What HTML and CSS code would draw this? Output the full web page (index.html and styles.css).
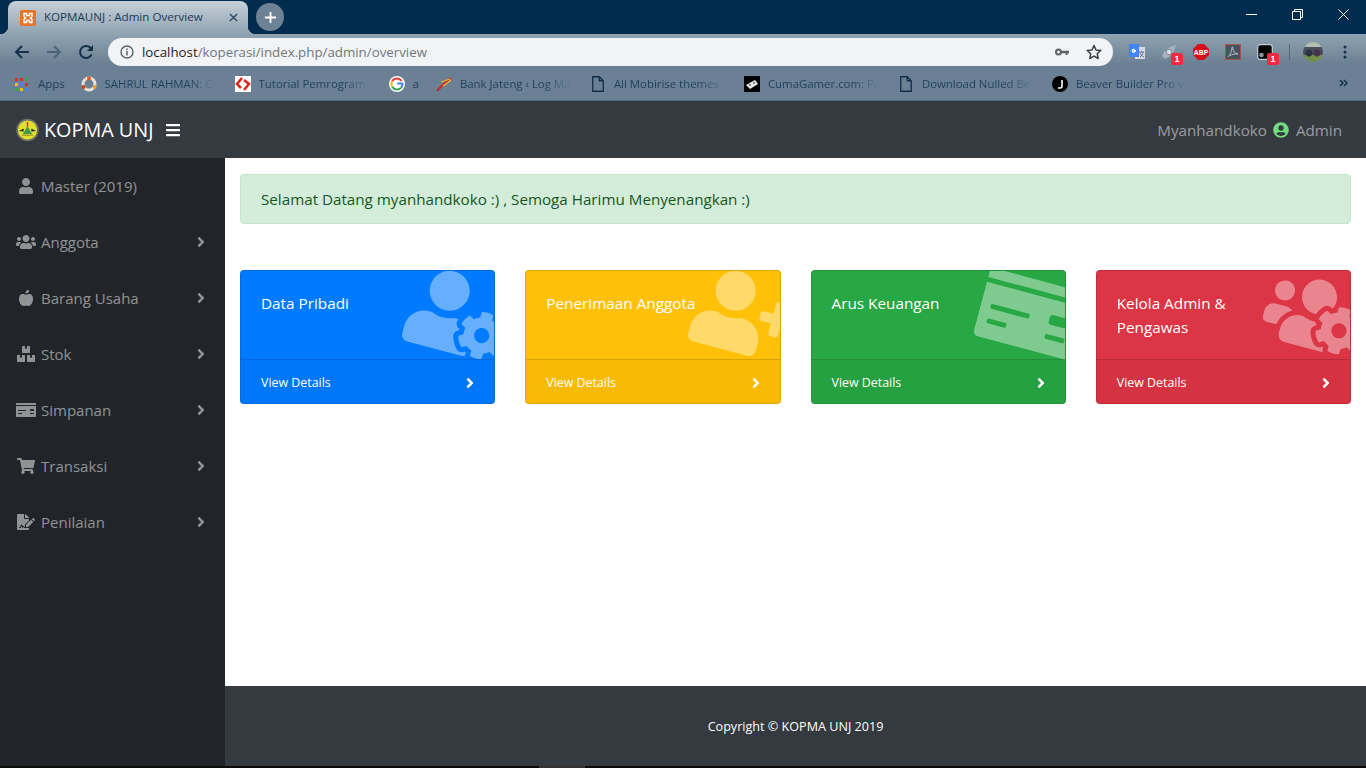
FILE: index.html
```html
<!DOCTYPE html>
<html lang="id">
<head>
<meta charset="utf-8">
<title>KOPMAUNJ : Admin Overview</title>
<link rel="stylesheet" href="styles.css">
</head>
<body>
<svg class="defs" width="0" height="0" aria-hidden="true">
  <symbol id="i-chevron" viewBox="0 0 256 512"><path d="M224.300 273l-136 136c-9.400 9.400-24.600 9.400-33.900 0l-22.600-22.600c-9.400-9.400-9.400-24.600 0-33.900l96.400-96.400-96.400-96.400c-9.400-9.400-9.400-24.600 0-33.900L54.300 103c9.400-9.400 24.600-9.400 33.900 0l136 136c9.500 9.400 9.500 24.600.1 34z"/></symbol>
  <symbol id="i-file" viewBox="0 0 12 16"><path d="M.75.75h6.500l4 4v10.500h-10.500z M7.250.75v4h4" fill="none" stroke="currentColor" stroke-width="1.300"/></symbol>
</svg>

<header class="browser">
  <div class="tabstrip">
    <div class="tab">
      <svg class="tab-fav" viewBox="0 0 16 16"><rect width="16" height="16" rx="1.500" fill="#e8742a"/><path d="M4 3.500h2.500v2h3v-2H12v3l-1.500 1.500L12 9.500v3H9.500v-2h-3v2H4v-3L5.500 8 4 6.500z" fill="none" stroke="#fff" stroke-width="1.400"/></svg>
      <span class="tab-title">KOPMAUNJ : Admin Overview</span>
      <svg class="tab-close" viewBox="0 0 10 10"><path d="M1 1l8 8M9 1l-8 8" stroke="#2e4a62" stroke-width="1.600"/></svg>
    </div>
    <div class="newtab"><svg viewBox="0 0 14 14"><path d="M7 1v12M1 7h12" stroke="#fff" stroke-width="2"/></svg></div>
    <div class="winctl">
      <svg viewBox="0 0 11 11"><path d="M0 5.500h11" stroke="#fff"/></svg>
      <svg viewBox="0 0 11 11"><path d="M.5 2.500h8v8h-8zM2.500 2.500v-2h8v8h-2" fill="none" stroke="#fff"/></svg>
      <svg viewBox="0 0 11 11"><path d="M.5.500l10 10M10.500.500l-10 10" stroke="#fff"/></svg>
    </div>
  </div>
  <div class="toolbars">
    <div class="toolbar">
      <div class="navbtns">
        <svg viewBox="0 0 16 16"><path d="M15 8H2M8 2L2 8l6 6" fill="none" stroke="#14304a" stroke-width="2"/></svg>
        <svg viewBox="0 0 16 16"><path d="M1 8h13M8 2l6 6-6 6" fill="none" stroke="#4c6479" stroke-width="2"/></svg>
        <svg viewBox="0 0 16 16"><path d="M13.500 10.500A6 6 0 1 1 12.300 3.800L14 5.500" fill="none" stroke="#14304a" stroke-width="2"/><path d="M15 1v6H9z" fill="#14304a"/></svg>
      </div>
      <div class="omnibox">
        <svg class="omni-info" viewBox="0 0 14 14"><circle cx="7" cy="7" r="6" fill="none" stroke="#5f6368" stroke-width="1.400"/><path d="M7 6v4.500M7 3.500v1.400" stroke="#5f6368" stroke-width="1.500"/></svg>
        <span class="url"><span class="url-host">localhost</span>/koperasi/index.php/admin/overview</span>
        <svg class="omni-key" viewBox="0 0 14 8"><circle cx="3.500" cy="4" r="2.500" fill="none" stroke="#5f6368" stroke-width="2"/><path d="M6 2.800h8v2.400h-1.400v1.800h-2V5.200H6z" fill="#5f6368"/></svg>
        <svg class="omni-star" viewBox="0 0 16 16"><path d="M8 1.500l2 4.500 4.800.5-3.600 3.200 1 4.800L8 12.100l-4.200 2.400 1-4.800L1.200 6.500 6 6z" fill="none" stroke="#3c4043" stroke-width="1.500" stroke-linejoin="round"/></svg>
      </div>
      <div class="exts">
        <div class="ext"><svg viewBox="0 0 16 16"><rect x="6" y="3" width="10" height="12" fill="#d5dade"/><path d="M10 8h5M12.500 7v1M11 13c2-1 2.500-3 3-5M11 9c1 2 2 3 4 4" fill="none" stroke="#667" stroke-width=".9"/><path d="M0 0h10v13H0z" fill="#4285f4"/><path d="M7 6.500H5v1h1a1.500 1.500 0 1 1-.4-2" fill="none" stroke="#fff" stroke-width="1.100"/></svg></div>
        <div class="ext"><svg viewBox="0 0 16 16"><path d="M15 1L9 3 3 8l-2 4 3 3 4-2 5-6z" fill="#a6b2bd"/><circle cx="8" cy="8" r="2.600" fill="#dfe4e8" stroke="#7d8c99"/></svg><span class="badge">1</span></div>
        <div class="ext"><svg viewBox="0 0 16 16"><path d="M5 0h6l5 5v6l-5 5H5l-5-5V5z" fill="#d5101d"/><text class="abp" x="8" y="10.700" text-anchor="middle">ABP</text></svg></div>
        <div class="ext"><svg viewBox="0 0 16 16"><rect x=".5" y=".5" width="15" height="15" fill="#45535f" stroke="#a4524c"/><path d="M3 13c2-2 3.500-5 4-9 .2-2 1.300-1 1 1-.3 2 1.500 4 5 5-3-.3-6 .3-8 1.500" fill="none" stroke="#b9c0c6"/></svg></div>
        <div class="ext"><svg viewBox="0 0 16 16"><rect x=".7" y=".7" width="14.600" height="14.600" rx="2.500" fill="#000" stroke="#c6ccd1" stroke-width="1.200"/><circle cx="4.500" cy="11" r="2.300" fill="#8a949c"/></svg><span class="badge">1</span></div>
        <div class="ext-sep"></div>
        <div class="avatar"></div>
        <svg class="kebab" viewBox="0 0 4 14"><circle cx="2" cy="2" r="1.500"/><circle cx="2" cy="7" r="1.500"/><circle cx="2" cy="12" r="1.500"/></svg>
      </div>
    </div>
    <div class="bookmarks">
      <div class="bm bm-apps"><svg class="bm-ico-sm" viewBox="0 0 13 13"><path d="M0 0h3v3H0z" fill="#d93025"/><path d="M5 0h3v3H5z" fill="#d93025"/><path d="M10 0h3v3h-3z" fill="#34a853"/><path d="M0 5h3v3H0z" fill="#fbbc04"/><path d="M5 5h3v3H5z" fill="#4285f4"/><path d="M10 5h3v3h-3z" fill="#d93025"/><path d="M0 10h3v3H0z" fill="#34a853"/><path d="M5 10h3v3H5z" fill="#fbbc04"/><path d="M10 10h3v3h-3z" fill="#4285f4"/></svg><span>Apps</span></div>
      <div class="bm"><svg class="bm-ico" viewBox="0 0 16 16"><circle cx="8" cy="8" r="6" fill="none" stroke="#e8e0d8" stroke-width="3"/><circle cx="8" cy="2.500" r="2" fill="#e05a20"/><circle cx="2.500" cy="11" r="2" fill="#c8401e"/><circle cx="13.500" cy="11" r="2" fill="#e8a030"/></svg><span class="bm-text">SAHRUL RAHMAN: C</span></div>
      <div class="bm"><svg class="bm-ico" viewBox="0 0 16 16"><rect width="16" height="16" fill="#fff"/><path d="M7 2L2 8l4 4M9 4l5 4-5 6" fill="none" stroke="#d9251c" stroke-width="2.500"/></svg><span class="bm-text">Tutorial Pemrograma</span></div>
      <div class="bm bm-g"><svg class="bm-ico" viewBox="0 0 16 16"><circle cx="8" cy="8" r="8" fill="#fff"/><path d="M12.600 5A5.500 5.500 0 0 0 3.200 5.200" fill="none" stroke="#ea4335" stroke-width="2"/><path d="M3.200 5.200a5.500 5.500 0 0 0 0 5.600" fill="none" stroke="#fbbc04" stroke-width="2"/><path d="M3.200 10.800a5.500 5.500 0 0 0 9 .8" fill="none" stroke="#34a853" stroke-width="2"/><path d="M12.200 11.600A5.500 5.500 0 0 0 13.500 7.500H8.200" fill="none" stroke="#4285f4" stroke-width="2"/></svg><span>a</span></div>
      <div class="bm"><svg class="bm-ico" viewBox="0 0 16 16"><path d="M1 15C5 10 9 7 15 2" fill="none" stroke="#c8281e" stroke-width="2"/><path d="M5 6l9-3M7 10l8-6" fill="none" stroke="#e8b830" stroke-width="1.300"/></svg><span class="bm-text">Bank Jateng ‹ Log Ma</span></div>
      <div class="bm"><svg class="bm-ico bm-file" viewBox="0 0 16 16"><use href="#i-file" x="2" width="12" height="16"/></svg><span class="bm-text">All Mobirise themes a</span></div>
      <div class="bm"><svg class="bm-ico" viewBox="0 0 16 16"><rect width="16" height="16" fill="#000"/><path d="M2 9l9-5 3 4-8 5z" fill="#e8e8e8"/><path d="M5 9h2M9 7h2" stroke="#222"/></svg><span class="bm-text">CumaGamer.com: Per</span></div>
      <div class="bm"><svg class="bm-ico bm-file" viewBox="0 0 16 16"><use href="#i-file" x="2" width="12" height="16"/></svg><span class="bm-text">Download Nulled Bea</span></div>
      <div class="bm"><svg class="bm-ico" viewBox="0 0 16 16"><circle cx="8" cy="8" r="8" fill="#000"/><path d="M10 4v6a2 2 0 0 1-2 2H6" fill="none" stroke="#fff" stroke-width="1.600"/></svg><span class="bm-text">Beaver Builder Pro v1</span></div>
      <svg class="bm-more" viewBox="0 0 9 8"><path d="M1 1l3 3-3 3M5 1l3 3-3 3" fill="none" stroke="#14304a" stroke-width="1.500"/></svg>
    </div>
  </div>
</header>

<nav class="navbar">
  <div class="brand">
    <svg class="logo" viewBox="0 0 24 24"><circle cx="12" cy="12" r="11.800" fill="#6d7065"/><circle cx="12" cy="12" r="10" fill="#e2e02c"/><path d="M12 8l5 8.500H7z" fill="#3f9a50"/><path d="M3 13l5-2.500v3zM21 13l-5-2.500v3z" fill="#26301f"/><path d="M12 3.500v5" stroke="#c8352a" stroke-width="1.500"/><path d="M6 17.500h12" stroke="#b7a52a" stroke-width="1.500"/></svg>
    <span class="brand-name">KOPMA UNJ</span>
    <svg class="burger" viewBox="0 0 448 512"><path d="M16 132h416c8.837 0 16-7.163 16-16V76c0-8.837-7.163-16-16-16H16C7.163 60 0 67.163 0 76v40c0 8.837 7.163 16 16 16zm0 160h416c8.837 0 16-7.163 16-16v-40c0-8.837-7.163-16-16-16H16c-8.837 0-16 7.163-16 16v40c0 8.837 7.163 16 16 16zm0 160h416c8.837 0 16-7.163 16-16v-40c0-8.837-7.163-16-16-16H16c-8.837 0-16 7.163-16 16v40c0 8.837 7.163 16 16 16z"/></svg>
  </div>
  <div class="navuser">
    <span>Myanhandkoko</span>
    <svg class="navuser-ico" viewBox="0 0 496 512"><path d="M248 8C111 8 0 119 0 256s111 248 248 248 248-111 248-248S385 8 248 8zm0 96c48.600 0 88 39.400 88 88s-39.400 88-88 88-88-39.400-88-88 39.400-88 88-88zm0 344c-58.700 0-111.300-26.600-146.500-68.200 18.800-35.400 55.600-59.800 98.500-59.800 2.400 0 4.800.4 7.100 1.100 13 4.200 26.600 6.900 40.900 6.900 14.300 0 28-2.700 40.900-6.900 2.300-.7 4.700-1.100 7.100-1.100 42.900 0 79.700 24.400 98.500 59.800C359.300 421.400 306.700 448 248 448z"/></svg>
    <span>Admin</span>
  </div>
</nav>

<div class="layout">
  <aside class="sidebar">
    <a class="side-item"><span class="side-ico"><svg viewBox="0 0 448 512"><path d="M224 256c70.700 0 128-57.300 128-128S294.700 0 224 0 96 57.300 96 128s57.300 128 128 128zm89.600 32h-16.700c-22.200 10.200-46.900 16-72.900 16s-50.600-5.800-72.900-16h-16.700C60.200 288 0 348.200 0 422.400V464c0 26.500 21.500 48 48 48h352c26.500 0 48-21.500 48-48v-41.600c0-74.200-60.200-134.400-134.400-134.400z"/></svg></span><span class="side-label">Master (2019)</span></a>
    <a class="side-item"><span class="side-ico"><svg viewBox="0 0 640 512"><path d="M96 224c35.300 0 64-28.700 64-64s-28.700-64-64-64-64 28.700-64 64 28.700 64 64 64zm448 0c35.300 0 64-28.700 64-64s-28.700-64-64-64-64 28.700-64 64 28.700 64 64 64zm32 32h-64c-17.600 0-33.500 7.100-45.100 18.600 40.300 22.100 68.900 62 75.100 109.400h66c17.700 0 32-14.300 32-32v-32c0-35.300-28.700-64-64-64zm-256 0c61.900 0 112-50.100 112-112S381.900 32 320 32 208 82.100 208 144s50.100 112 112 112zm76.800 32h-8.300c-20.800 10-43.900 16-68.500 16s-47.600-6-68.500-16h-8.300C179.600 288 128 339.600 128 403.200V432c0 26.500 21.500 48 48 48h288c26.500 0 48-21.500 48-48v-28.800c0-63.600-51.600-115.200-115.200-115.200zm-223.700-13.400C161.500 263.100 145.600 256 128 256H64c-35.300 0-64 28.700-64 64v32c0 17.700 14.300 32 32 32h65.900c6.300-47.400 34.900-87.300 75.200-109.400z"/></svg></span><span class="side-label">Anggota</span><svg class="chev"><use href="#i-chevron"/></svg></a>
    <a class="side-item"><span class="side-ico"><svg viewBox="0 0 448 512"><path d="M350.850 129c25.970 4.670 47.270 18.670 63.920 42 14.650 20.670 24.640 46.670 29.960 78 4.670 28.670 4.320 57.330-1 86-7.990 47.330-23.970 87-47.940 119-28.640 38.670-64.590 58-107.870 58-10.660 0-22.300-3.330-34.960-10-8.660-5.330-18.310-8-28.970-8s-20.300 2.670-28.970 8c-12.660 6.670-24.300 10-34.960 10-43.280 0-79.230-19.330-107.870-58-23.970-32-39.950-71.670-47.940-119-5.320-28.670-5.670-57.330-1-86 5.320-31.330 15.310-57.330 29.960-78 16.650-23.330 37.950-37.330 63.920-42 15.980-2.670 37.950-.33 65.920 7 23.970 6.670 44.280 14.670 60.930 24 16.650-9.330 36.960-17.330 60.930-24 27.980-7.330 49.960-9.670 65.920-7zm-54.940-41c-9.320 8.670-21.650 15-36.960 19-10.660 3.330-22.300 5-34.960 5l-14.980-1c-1.330-9.330-1.330-20 0-32 2.670-24 10.320-42.330 22.970-55 9.320-8.670 21.650-15 36.960-19 10.660-3.330 22.300-5 34.960-5l14.980 1 1 15c0 12.670-1.670 24.330-4.990 35-3.990 15.330-10.310 27.670-18.980 37z"/></svg></span><span class="side-label">Barang Usaha</span><svg class="chev"><use href="#i-chevron"/></svg></a>
    <a class="side-item"><span class="side-ico"><svg viewBox="0 0 576 512"><path d="M560 288h-80v96l-32-21.300-32 21.300v-96h-80c-8.800 0-16 7.200-16 16v192c0 8.800 7.200 16 16 16h224c8.800 0 16-7.200 16-16V304c0-8.800-7.200-16-16-16zm-384-64h224c8.800 0 16-7.200 16-16V16c0-8.800-7.200-16-16-16h-80v96l-32-21.300L256 96V0h-80c-8.800 0-16 7.200-16 16v192c0 8.800 7.200 16 16 16zm64 64h-80v96l-32-21.300L96 384v-96H16c-8.800 0-16 7.200-16 16v192c0 8.800 7.200 16 16 16h224c8.800 0 16-7.200 16-16V304c0-8.800-7.200-16-16-16z"/></svg></span><span class="side-label">Stok</span><svg class="chev"><use href="#i-chevron"/></svg></a>
    <a class="side-item"><span class="side-ico"><svg viewBox="0 0 640 512"><path fill-rule="evenodd" d="M0 448c0 17.670 14.330 32 32 32h576c17.670 0 32-14.330 32-32V128H0v320zm448-208c0-8.840 7.160-16 16-16h96c8.840 0 16 7.160 16 16v32c0 8.840-7.160 16-16 16h-96c-8.840 0-16-7.160-16-16v-32zm0 120c0-4.420 3.580-8 8-8h112c4.420 0 8 3.580 8 8v16c0 4.420-3.580 8-8 8H456c-4.420 0-8-3.580-8-8v-16zM64 264c0-4.420 3.580-8 8-8h240c4.420 0 8 3.580 8 8v16c0 4.420-3.580 8-8 8H72c-4.420 0-8-3.580-8-8v-16zm0 96c0-4.420 3.580-8 8-8h112c4.420 0 8 3.580 8 8v16c0 4.420-3.580 8-8 8H72c-4.420 0-8-3.580-8-8v-16zM624 32H16C7.160 32 0 39.160 0 48v48h640V48c0-8.840-7.160-16-16-16z"/></svg></span><span class="side-label">Simpanan</span><svg class="chev"><use href="#i-chevron"/></svg></a>
    <a class="side-item"><span class="side-ico"><svg viewBox="0 0 576 512"><path d="M528.120 301.319l47.273-208C578.806 78.301 567.391 64 551.990 64H159.208l-9.166-44.810C147.758 8.021 137.930 0 126.529 0H24C10.745 0 0 10.745 0 24v16c0 13.255 10.745 24 24 24h69.883l70.248 343.435C147.325 417.100 136 435.222 136 456c0 30.928 25.072 56 56 56s56-25.072 56-56c0-15.674-6.447-29.835-16.824-40h209.647C430.447 426.165 424 440.326 424 456c0 30.928 25.072 56 56 56s56-25.072 56-56c0-22.172-12.888-41.332-31.579-50.405l5.517-24.276c3.413-15.018-8.002-29.319-23.403-29.319H218.117l-6.545-32h293.145c11.206 0 20.920-7.754 23.403-18.681z"/></svg></span><span class="side-label">Transaksi</span><svg class="chev"><use href="#i-chevron"/></svg></a>
    <a class="side-item"><span class="side-ico"><svg viewBox="0 0 576 512"><path d="M218.170 424.140c-2.950-5.920-8.090-6.520-10.170-6.520s-7.220.59-10.020 6.190l-7.670 15.340c-6.370 12.780-25.030 11.370-29.480-2.090L144 386.590l-10.610 31.880c-5.890 17.660-22.380 29.530-41 29.530H80c-8.840 0-16-7.160-16-16s7.160-16 16-16h12.390c4.830 0 9.110-3.080 10.640-7.660l18.190-54.640c3.300-9.810 12.440-16.410 22.780-16.410s19.480 6.590 22.770 16.410l13.880 41.640c19.750-16.190 54.060-9.700 66 14.160 1.890 3.780 5.490 5.950 9.360 6.260v-82.120l128-127.090V160H248c-13.200 0-24-10.800-24-24V0H24C10.700 0 0 10.700 0 24v464c0 13.300 10.700 24 24 24h336c13.300 0 24-10.700 24-24v-40l-128-.11c-16.120-.31-30.580-9.280-37.830-23.750zM384 121.900c0-6.300-2.500-12.400-7-16.900L279.100 7c-4.500-4.500-10.600-7-17-7H256v128h128v-6.100zm-96 225.060V416h68.990l161.680-162.780-67.880-67.880L288 346.960zm280.540-179.630l-31.870-31.870c-9.940-9.940-26.070-9.940-36.010 0l-27.250 27.250 67.880 67.880 27.250-27.250c9.950-9.940 9.950-26.070 0-36.010z"/></svg></span><span class="side-label">Penilaian</span><svg class="chev"><use href="#i-chevron"/></svg></a>
  </aside>

  <main class="main">
    <div class="content">
      <div class="alert">Selamat Datang myanhandkoko :) , Semoga Harimu Menyenangkan :)</div>
      <div class="cards">
        <div class="card card-blue">
          <svg class="card-icon" viewBox="0 0 640 512"><path d="M610.500 373.300c2.600-14.100 2.600-28.500 0-42.600l25.800-14.900c3-1.700 4.300-5.200 3.300-8.500-6.700-21.600-18.200-41.200-33.200-57.400-2.300-2.500-6-3.100-9-1.400l-25.800 14.900c-10.900-9.300-23.400-16.500-36.900-21.300v-29.800c0-3.400-2.400-6.400-5.700-7.100-22.300-5-45-4.800-66.200 0-3.300.7-5.700 3.700-5.700 7.100v29.800c-13.500 4.800-26 12-36.900 21.300l-25.800-14.900c-2.900-1.700-6.700-1.100-9 1.400-15 16.200-26.500 35.800-33.200 57.400-1 3.300.4 6.800 3.300 8.500l25.800 14.900c-2.600 14.100-2.600 28.500 0 42.600l-25.800 14.900c-3 1.700-4.300 5.200-3.300 8.500 6.700 21.600 18.200 41.100 33.200 57.400 2.300 2.500 6 3.100 9 1.400l25.800-14.900c10.900 9.300 23.400 16.500 36.900 21.300v29.800c0 3.400 2.400 6.400 5.700 7.100 22.300 5 45 4.800 66.200 0 3.300-.7 5.700-3.700 5.700-7.100v-29.800c13.500-4.800 26-12 36.900-21.300l25.800 14.900c2.900 1.700 6.700 1.100 9-1.400 15-16.200 26.500-35.800 33.200-57.400 1-3.300-.4-6.800-3.300-8.500l-25.800-14.900zM496 400.500c-26.800 0-48.500-21.800-48.500-48.500s21.800-48.500 48.500-48.500 48.500 21.800 48.500 48.500-21.700 48.500-48.500 48.500zM224 256c70.700 0 128-57.300 128-128S294.700 0 224 0 96 57.300 96 128s57.300 128 128 128zm201.200 226.500c-2.300-1.200-4.600-2.600-6.800-3.900l-7.900 4.600c-6 3.400-12.800 5.300-19.600 5.300-10.900 0-21.400-4.600-28.900-12.600-18.300-19.800-32.300-43.900-40.200-69.600-5.500-17.700 1.900-36.400 17.900-45.700l7.900-4.600c-.1-2.600-.1-5.200 0-7.800l-7.900-4.600c-16-9.200-23.400-28-17.900-45.700.9-2.900 2.200-5.800 3.200-8.700-3.800-.3-7.500-1.200-11.400-1.200h-16.700c-22.200 10.200-46.900 16-72.900 16s-50.600-5.800-72.900-16h-16.700C60.200 288 0 348.200 0 422.400V464c0 26.500 21.500 48 48 48h352c10.100 0 19.500-3.200 27.200-8.500-1.200-3.800-2-7.700-2-11.800v-9.200z"/></svg>
          <div class="card-body"><div class="card-title">Data Pribadi</div></div>
          <a class="card-foot"><span>View Details</span><svg class="chev"><use href="#i-chevron"/></svg></a>
        </div>
        <div class="card card-yellow">
          <svg class="card-icon" viewBox="0 0 640 512"><path d="M624 208h-64v-64c0-8.800-7.200-16-16-16h-32c-8.800 0-16 7.200-16 16v64h-64c-8.800 0-16 7.200-16 16v32c0 8.800 7.200 16 16 16h64v64c0 8.800 7.200 16 16 16h32c8.800 0 16-7.200 16-16v-64h64c8.800 0 16-7.200 16-16v-32c0-8.800-7.200-16-16-16zm-400 48c70.700 0 128-57.300 128-128S294.700 0 224 0 96 57.300 96 128s57.300 128 128 128zm89.600 32h-16.700c-22.200 10.200-46.900 16-72.900 16s-50.600-5.800-72.900-16h-16.700C60.200 288 0 348.200 0 422.400V464c0 26.500 21.500 48 48 48h352c26.500 0 48-21.500 48-48v-41.600c0-74.200-60.200-134.400-134.400-134.400z"/></svg>
          <div class="card-body"><div class="card-title">Penerimaan Anggota</div></div>
          <a class="card-foot"><span>View Details</span><svg class="chev"><use href="#i-chevron"/></svg></a>
        </div>
        <div class="card card-green">
          <svg class="card-icon" viewBox="0 0 640 512"><path fill-rule="evenodd" d="M0 448c0 17.670 14.330 32 32 32h576c17.670 0 32-14.330 32-32V128H0v320zm448-208c0-8.840 7.160-16 16-16h96c8.840 0 16 7.160 16 16v32c0 8.840-7.160 16-16 16h-96c-8.840 0-16-7.160-16-16v-32zm0 120c0-4.420 3.580-8 8-8h112c4.420 0 8 3.580 8 8v16c0 4.420-3.580 8-8 8H456c-4.420 0-8-3.580-8-8v-16zM64 264c0-4.420 3.580-8 8-8h240c4.420 0 8 3.580 8 8v16c0 4.420-3.580 8-8 8H72c-4.420 0-8-3.580-8-8v-16zm0 96c0-4.420 3.580-8 8-8h112c4.420 0 8 3.580 8 8v16c0 4.420-3.580 8-8 8H72c-4.420 0-8-3.580-8-8v-16zM624 32H16C7.160 32 0 39.160 0 48v48h640V48c0-8.840-7.160-16-16-16z"/></svg>
          <div class="card-body"><div class="card-title">Arus Keuangan</div></div>
          <a class="card-foot"><span>View Details</span><svg class="chev"><use href="#i-chevron"/></svg></a>
        </div>
        <div class="card card-red">
          <svg class="card-icon" viewBox="0 0 640 512"><path d="M610.500 341.300c2.600-14.100 2.600-28.500 0-42.600l25.800-14.900c3-1.700 4.300-5.200 3.300-8.500-6.700-21.600-18.200-41.200-33.200-57.400-2.300-2.500-6-3.100-9-1.400l-25.800 14.900c-10.900-9.300-23.400-16.500-36.900-21.300v-29.800c0-3.400-2.400-6.400-5.700-7.100-22.300-5-45-4.800-66.200 0-3.300.7-5.700 3.700-5.700 7.100v29.800c-13.500 4.800-26 12-36.900 21.300l-25.800-14.900c-2.900-1.700-6.700-1.100-9 1.400-15 16.200-26.500 35.800-33.200 57.400-1 3.300.4 6.800 3.300 8.500l25.800 14.900c-2.600 14.100-2.600 28.500 0 42.600l-25.800 14.900c-3 1.700-4.300 5.200-3.300 8.500 6.700 21.600 18.200 41.100 33.200 57.400 2.300 2.500 6 3.100 9 1.400l25.800-14.900c10.900 9.300 23.400 16.500 36.900 21.300v29.800c0 3.400 2.400 6.400 5.700 7.100 22.300 5 45 4.800 66.200 0 3.300-.7 5.700-3.700 5.700-7.100v-29.800c13.500-4.800 26-12 36.900-21.300l25.800 14.900c2.900 1.700 6.700 1.100 9-1.400 15-16.200 26.500-35.800 33.200-57.400 1-3.300-.4-6.800-3.300-8.500l-25.800-14.900zM496 368.500c-26.800 0-48.500-21.800-48.500-48.500s21.800-48.500 48.500-48.500 48.500 21.800 48.500 48.500-21.700 48.500-48.500 48.500zM96 224c35.300 0 64-28.700 64-64s-28.700-64-64-64-64 28.700-64 64 28.700 64 64 64zm224 32c1.900 0 3.700-.5 5.600-.6 8.300-21.700 20.500-42.100 36.300-59.200 7.400-8 17.900-12.600 28.900-12.600 6.900 0 13.700 1.800 19.600 5.300l7.900 4.600c.8-.5 1.600-.9 2.400-1.400 7-14.600 11.200-30.800 11.200-48 0-61.900-50.100-112-112-112S208 82.100 208 144c0 61.900 50.100 112 112 112zm105.200 194.500c-2.300-1.200-4.600-2.600-6.800-3.900-8.200 4.800-15.300 9.800-27.500 9.800-10.900 0-21.400-4.600-28.900-12.600-18.300-19.800-32.300-43.900-40.200-69.600-10.700-34.500 24.900-49.700 25.800-50.300-.1-2.600-.1-5.200 0-7.800l-7.900-4.600c-3.800-2.200-7-5-9.800-8.100-3.300.2-6.500.6-9.800.6-24.600 0-47.600-6-68.500-16h-8.300C179.600 288 128 339.600 128 403.200V432c0 26.500 21.500 48 48 48h255.400c-3.700-6-6.200-12.800-6.200-20.300v-9.200zM173.100 274.600C161.500 263.100 145.600 256 128 256H64c-35.300 0-64 28.700-64 64v32c0 17.700 14.300 32 32 32h65.900c6.300-47.400 34.900-87.300 75.200-109.400z"/></svg>
          <div class="card-body"><div class="card-title">Kelola Admin &amp; Pengawas</div></div>
          <a class="card-foot"><span>View Details</span><svg class="chev"><use href="#i-chevron"/></svg></a>
        </div>
      </div>
    </div>
    <footer class="footer">Copyright © KOPMA UNJ 2019</footer>
  </main>
</div>
<div class="taskbar"><div class="taskbar-item"></div></div>
</body>
</html>
```
FILE: styles.css
```css
* { box-sizing: border-box; }
html, body { margin: 0; height: 100%; }
body {
  width: 1366px;
  height: 768px;
  overflow: hidden;
  display: flex;
  flex-direction: column;
  font-family: "Open Sans", "Noto Sans", sans-serif;
  font-size: 15px;
  line-height: 24px;
  background: #fff;
  color: #212529;
}
svg { display: block; flex: none; }
.defs { position: absolute; }

/* browser chrome */
.browser { flex: none; height: 101px; font-size: 12px; }
.tabstrip {
  height: 34px;
  background: #022c4f;
  display: flex;
  align-items: flex-start;
  padding-left: 8px;
}
.tab {
  position: relative;
  width: 240px;
  height: 33px;
  margin-top: 1px;
  border-radius: 8px 8px 0 0;
  background: linear-gradient(#c6d0d9, #90a3b1);
  display: flex;
  align-items: center;
  padding: 0 9px 0 12px;
  color: #203b54;
}
.tab::before, .tab::after {
  content: "";
  position: absolute;
  bottom: 0;
  width: 8px;
  height: 8px;
}
.tab::before { left: -8px; background: radial-gradient(circle at 0 0, transparent 8px, #90a3b1 8.500px); }
.tab::after { right: -8px; background: radial-gradient(circle at 100% 0, transparent 8px, #90a3b1 8.500px); }
.tab-fav { width: 16px; height: 16px; margin-right: 8px; }
.tab-title { flex: 1; font-size: 11.600px; white-space: nowrap; padding-bottom: 2px; }
.tab-close { width: 9px; height: 9px; margin-right: 1px; }
.newtab {
  width: 28px;
  height: 28px;
  margin: 3px 0 0 8px;
  border-radius: 50%;
  background: #6d8294;
  display: flex;
  align-items: center;
  justify-content: center;
}
.newtab svg { width: 13px; height: 13px; }
.winctl {
  margin-left: auto;
  display: flex;
  gap: 35px;
  padding: 9px 17px 0 0;
}
.winctl svg { width: 11px; height: 11px; }
.toolbars {
  height: 67px;
  background: linear-gradient(#90a3b1, #6b8094 30px);
  border-bottom: 1px solid #4f6a80;
}
.toolbar { height: 32px; padding-top: 4px; display: flex; }
.navbtns {
  width: 108px;
  height: 28px;
  display: flex;
  align-items: center;
  gap: 16px;
  padding-left: 14px;
}
.navbtns svg { width: 16px; height: 16px; }
.omnibox {
  width: 1005px;
  height: 28px;
  border-radius: 14px;
  background: #f1f3f4;
  display: flex;
  align-items: center;
  padding: 0 11px 0 12px;
}
.omni-info { width: 14px; height: 14px; margin-right: 8px; }
.url { flex: 1; font-size: 13.300px; color: #70787f; white-space: nowrap; }
.url-host { color: #1f2326; }
.omni-key { width: 14px; height: 8px; margin-right: 17px; }
.omni-star { width: 16px; height: 16px; }
.exts { flex: 1; height: 28px; display: flex; align-items: center; padding-left: 16px; }
.ext { position: relative; width: 16px; height: 16px; margin-right: 16px; }
.ext svg { width: 16px; height: 16px; }
.abp { font: 700 6.800px "Liberation Sans", sans-serif; fill: #fff; }
.badge {
  position: absolute;
  left: 10px;
  top: 9px;
  width: 12px;
  height: 12px;
  border-radius: 2px;
  background: #ef2b3d;
  color: #fff;
  font: 700 9px/12px "Liberation Sans", sans-serif;
  text-align: center;
}
.ext-sep { width: 1px; height: 16px; background: #56697b; margin: 0 13px 0 0; }
.avatar {
  width: 20px;
  height: 20px;
  border-radius: 50%;
  background:
    radial-gradient(circle at 30% 55%, #2d3344 0 3px, transparent 4px),
    radial-gradient(circle at 70% 55%, #46324a 0 3px, transparent 4px),
    linear-gradient(#b3bdb0 0 25%, #4a4f5c 25% 65%, #6f8f4a 65%);
  margin-right: 20px;
}
.kebab { width: 4px; height: 14px; fill: #14304a; }
.bookmarks {
  position: relative;
  height: 34px;
  display: flex;
  align-items: center;
  padding: 2px 0 0 15px;
  color: #1f3f5d;
  font-size: 11.400px;
  white-space: nowrap;
}
.bm { display: flex; align-items: center; margin-right: 19px; }
.bm-apps { margin-right: 16px; }
.bm-g { margin-right: 17px; }
.bm-ico-sm { width: 13px; height: 13px; margin-right: 10px; }
.bm-ico { width: 16px; height: 16px; margin-right: 8px; }
.bm-file { color: #0f2c47; }
.bm-text {
  display: block;
  width: 111px;
  -webkit-mask-image: linear-gradient(90deg, #000 75%, transparent);
  mask-image: linear-gradient(90deg, #000 75%, transparent);
}
.bm-more { width: 9px; height: 8px; position: absolute; left: 1339px; top: 13px; }

/* app navbar */
.navbar {
  flex: none;
  height: 57px;
  background: #343a40;
  display: flex;
  align-items: center;
  justify-content: space-between;
  padding: 0 24px 0 16px;
}
.brand { display: flex; align-items: center; }
.logo { width: 23px; height: 24px; margin-right: 5px; }
.brand-name { color: #fff; font-size: 19.800px; margin-right: 13px; white-space: nowrap; }
.burger { width: 14px; height: 16px; fill: #fff; }
.navuser { display: flex; align-items: center; color: rgba(255, 255, 255, .5); font-size: 15.200px; }
.navuser-ico { width: 16px; height: 16px; margin: 0 7px 0 6px; fill: #6fdc80; }

/* layout */
.layout { flex: 1; min-height: 0; display: flex; }
.sidebar { width: 225px; flex: none; background: #212529; }
.side-item {
  height: 56px;
  display: flex;
  align-items: center;
  padding: 0 20px 0 16px;
  color: rgba(255, 255, 255, .5);
}
.side-ico { width: 20px; height: 16px; margin-right: 5px; display: flex; justify-content: center; }
.side-ico svg { height: 16px; fill: rgba(255, 255, 255, .5); }
.side-label { flex: 1; white-space: nowrap; }
.chev { width: 8px; height: 16px; fill: currentColor; }
.main { flex: 1; min-width: 0; display: flex; flex-direction: column; }
.content { flex: 1; padding: 16px 15px 0; }
.alert {
  height: 50px;
  padding: 12px 20px;
  border: 1px solid #c3e6cb;
  border-radius: 4px;
  background: #d4edda;
  color: #155724;
  font-size: 15.200px;
  margin-bottom: 46px;
  white-space: nowrap;
}
.cards { display: grid; grid-template-columns: repeat(4, 1fr); gap: 30px; }
.card {
  position: relative;
  height: 134px;
  overflow: hidden;
  border: 1px solid rgba(0, 0, 0, .125);
  border-radius: 4px;
  color: #fff;
  display: flex;
  flex-direction: column;
}
.card-blue { background: #007bff; }
.card-yellow { background: #ffc107; }
.card-green { background: #28a745; }
.card-red { background: #dc3545; }
.card-icon {
  position: absolute;
  top: 3px;
  right: -15px;
  width: 100px;
  height: 80px;
  fill: #fff;
  opacity: .4;
  transform: rotate(15deg);
}
.card-body { flex: 1; padding: 20px; position: relative; font-size: 15.300px; }
.card-title { margin-right: 48px; }
.card-foot {
  flex: none;
  height: 44px;
  padding: 2px 20px 0 20px;
  border-top: 1px solid rgba(0, 0, 0, .125);
  background: rgba(0, 0, 0, .03);
  display: flex;
  align-items: center;
  justify-content: space-between;
  font-size: 12.400px;
  position: relative;
}
.footer {
  height: 80px;
  flex: none;
  padding-top: 2px;
  background: #343a40;
  color: #fff;
  font-size: 12.600px;
  display: flex;
  align-items: center;
  justify-content: center;
}
.taskbar { flex: none; height: 2px; background: #0c0c0c; padding-left: 539px; }
.taskbar-item { width: 46px; height: 2px; background: #333; }
```
